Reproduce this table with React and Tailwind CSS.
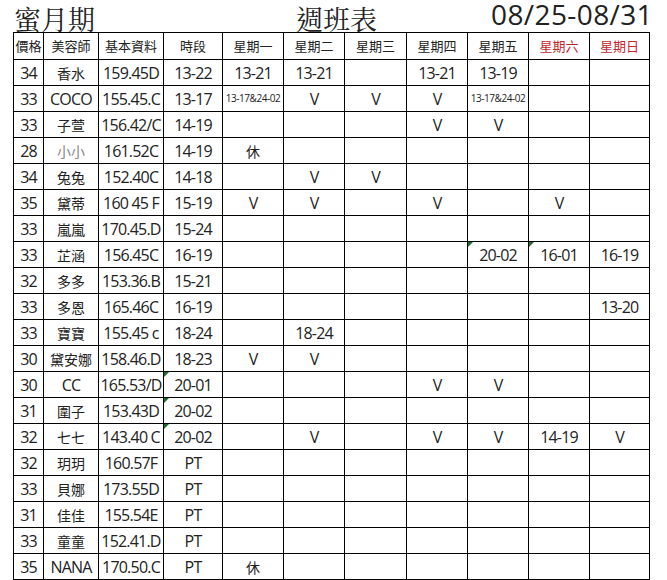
import React from 'react'

const cols = 'grid-cols-[29px_54px_64px_58px_60px_60px_61px_60px_60px_60px_59px]'

const days = ['星期一', '星期二', '星期三', '星期四', '星期五', '星期六', '星期日']

// [價格, 美容師, 基本資料, 時段, 一, 二, 三, 四, 五, 六, 日]
// prefixes: s: small text, g: gray text, t: cell with green corner mark
const rows = [
  ['34', '香水', '159.45D', '13-22', '13-21', '13-21', '', '13-21', '13-19', '', ''],
  ['33', 'COCO', '155.45.C', '13-17', 's:13-17&24-02', 'V', 'V', 'V', 's:13-17&24-02', '', ''],
  ['33', '子萱', '156.42/C', '14-19', '', '', '', 'V', 'V', '', ''],
  ['28', 'g:小小', '161.52C', '14-19', '休', '', '', '', '', '', ''],
  ['34', '兔兔', '152.40C', '14-18', '', 'V', 'V', '', '', '', ''],
  ['35', '黛蒂', '160 45 F', '15-19', 'V', 'V', '', 'V', '', 'V', ''],
  ['33', '嵐嵐', '170.45.D', '15-24', '', '', '', '', '', '', ''],
  ['33', '芷涵', '156.45C', '16-19', '', '', '', '', 't:20-02', 't:16-01', '16-19'],
  ['32', '多多', '153.36.B', '15-21', '', '', '', '', '', '', ''],
  ['33', '多恩', '165.46C', '16-19', '', '', '', '', '', '', '13-20'],
  ['33', '寶寶', '155.45 c', '18-24', '', '18-24', '', '', '', '', ''],
  ['30', '黛安娜', '158.46.D', '18-23', 'V', 'V', '', '', '', '', ''],
  ['30', 'CC', '165.53/D', 't:20-01', '', '', '', 'V', 'V', '', ''],
  ['31', '圍子', '153.43D', 't:20-02', '', '', '', '', '', '', ''],
  ['32', '七七', '143.40 C', 't:20-02', '', 'V', '', 'V', 'V', '14-19', 'V'],
  ['32', '玥玥', '160.57F', 'PT', '', '', '', '', '', '', ''],
  ['33', '貝娜', '173.55D', 'PT', '', '', '', '', '', '', ''],
  ['31', '佳佳', '155.54E', 'PT', '', '', '', '', '', '', ''],
  ['33', '童童', '152.41.D', 'PT', '', '', '', '', '', '', ''],
  ['35', 'NANA', '170.50.C', 'PT', '休', '', '', '', '', '', ''],
]

const sans = "font-['Open_Sans','Noto_Sans_CJK_TC',sans-serif]"
const cjk = /[\u4e00-\u9fff]/

function Cell({ value }) {
  let text = value
  let kind = ''
  if (value.includes(':')) {
    kind = value.slice(0, 1)
    text = value.slice(2)
  }
  const isCjk = cjk.test(text)
  return (
    <div className="relative bg-white flex items-center justify-center h-[25px] overflow-hidden">
      {kind === 't' && (
        <span className="absolute left-0 top-0 w-0 h-0 border-t-[5px] border-r-[5px] border-t-[#1f6b2b] border-r-transparent" />
      )}
      {kind === 's' ? (
        <span className="text-[10px] tracking-[-0.45px] text-[#222]">{text}</span>
      ) : isCjk ? (
        <span className={`text-[14px] leading-none font-['Noto_Sans_CJK_TC',sans-serif] ${kind === 'g' ? 'text-[#888]' : 'text-[#222]'}`}>
          {text}
        </span>
      ) : (
        <span className="text-[16px] tracking-[-0.8px] leading-none text-[#222]">{text}</span>
      )}
    </div>
  )
}

export default function App() {
  return (
    <div className={`w-[667px] h-[580px] bg-white ${sans}`}>
      {/* title row */}
      <div className="h-[32px] flex items-start">
        <span className="ml-[14px] mt-[5px] w-[282px] text-[27px] leading-[27px] text-[#222] font-['Noto_Serif_CJK_TC','Noto_Sans_CJK_TC',serif]">
          蜜月期
        </span>
        <span className="mt-[5px] w-[195px] text-[27px] leading-[27px] text-[#222] font-['Noto_Serif_CJK_TC','Noto_Sans_CJK_TC',serif]">
          週班表
        </span>
        <span className="text-[28px] tracking-[0.4px] leading-[28px] text-[#222]">08/25-08/31</span>
      </div>

      {/* schedule grid */}
      <div className={`ml-[13px] w-[637px] grid ${cols} gap-px bg-black p-px`}>
        {['價格', '美容師', '基本資料', '時段'].map(h => (
          <div key={h} className="bg-white h-[26px] flex items-center justify-center text-[13px] text-[#222] font-['Noto_Sans_CJK_TC',sans-serif]">
            {h}
          </div>
        ))}
        {days.map((d, i) => (
          <div
            key={d}
            className={`bg-white h-[26px] flex items-center justify-center text-[13px] font-['Noto_Sans_CJK_TC',sans-serif] ${i >= 5 ? 'text-[#c4262e]' : 'text-[#222]'}`}
          >
            {d}
          </div>
        ))}
        {rows.map((r, ri) =>
          r.map((v, ci) => <Cell key={`${ri}-${ci}`} value={v} />)
        )}
      </div>
    </div>
  )
}
